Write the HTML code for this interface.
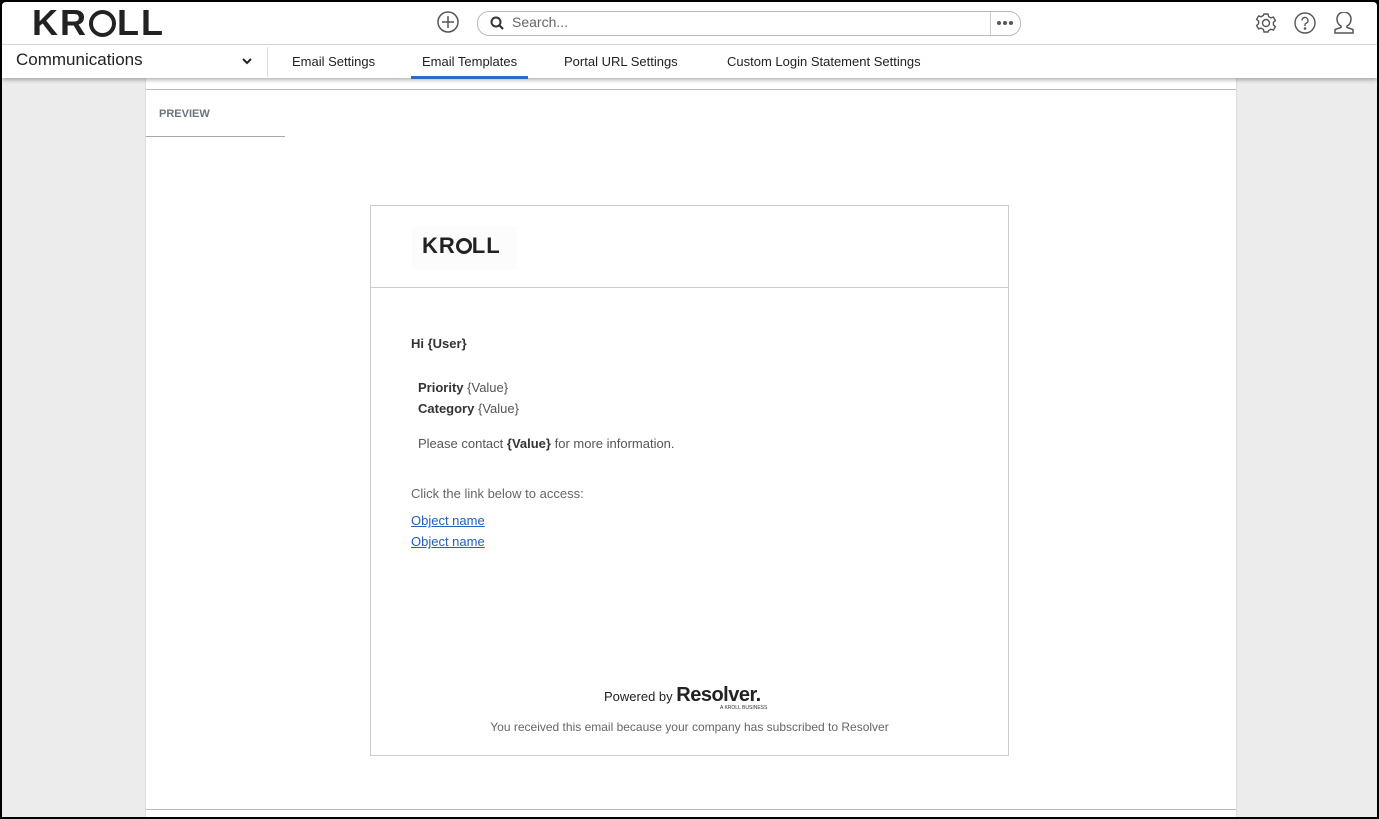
<!DOCTYPE html><html><head><style>
body{margin:0;width:1379px;height:819px;overflow:hidden;font-family:"Liberation Sans",sans-serif;background:#000;}
#f{position:absolute;left:2px;top:2px;width:1375px;height:815px;background:#ececec;overflow:hidden;border-radius:4px 4px 0 0}
.hdr{position:absolute;left:0;top:0;width:100%;height:42px;background:#fff;border-bottom:1px solid #ddd}
.nav{position:absolute;left:0;top:43px;width:100%;height:33px;background:#fff;box-shadow:0 2px 4px rgba(0,0,0,.3);z-index:2}
.logo{position:absolute;font-weight:bold;color:#222;letter-spacing:1px}
.tab{position:absolute;top:9px;font-size:13px;color:#222}
.panel{position:absolute;left:143px;top:76px;width:1090px;height:760px;background:#fff;border-left:1px solid #ddd;border-right:1px solid #ddd}
.card{position:absolute;left:368px;top:203px;width:637px;height:549px;border:1px solid #ccc;background:#fff;font-size:13px;color:#333}
a{color:#2060c0;text-decoration:underline}
.g{color:#555}
</style></head><body><div id="f">
<div class="hdr">
<div class="logo" style="left:30px;top:0px;font-size:36px;letter-spacing:2px">KR<span style="display:inline-block;width:27px;height:27px;border:4px solid #222;border-radius:50%;box-sizing:border-box;vertical-align:-2px;margin:0 1px"></span>LL</div>
<svg style="position:absolute;left:435px;top:9px" width="22" height="22"><circle cx="11" cy="11" r="10" fill="none" stroke="#555" stroke-width="1.5"/><path d="M11 5v12M5 11h12" stroke="#555" stroke-width="1.5"/></svg>
<div style="position:absolute;left:475px;top:9px;width:542px;height:23px;border:1px solid #bbb;border-radius:12px"></div>
<div style="position:absolute;left:988px;top:10px;width:1px;height:23px;background:#ccc"></div>
<svg style="position:absolute;left:488px;top:14px" width="14" height="14"><circle cx="6" cy="6" r="4.5" fill="none" stroke="#333" stroke-width="2"/><path d="M9 9l4 4" stroke="#333" stroke-width="2.2"/></svg>
<div style="position:absolute;left:510px;top:12px;font-size:14px;color:#666">Search...</div>
<svg style="position:absolute;left:994px;top:18px" width="18" height="6" fill="#555"><circle cx="3" cy="3" r="2"/><circle cx="9" cy="3" r="2"/><circle cx="15" cy="3" r="2"/></svg>
<svg style="position:absolute;left:1253px;top:10px" width="22" height="22" fill="none" stroke="#555" stroke-width="1.4"><circle cx="11" cy="11" r="3.5"/><path d="M9 2h4l.6 2.6 2.3 1.3 2.5-.8 2 3.4-2 1.8v2.6l2 1.8-2 3.4-2.5-.8-2.3 1.3L13 20H9l-.6-2.6-2.3-1.3-2.5.8-2-3.4 2-1.8V9.1l-2-1.8 2-3.4 2.5.8 2.3-1.3z"/></svg>
<svg style="position:absolute;left:1292px;top:10px" width="22" height="22" fill="none" stroke="#555" stroke-width="1.4"><circle cx="11" cy="11" r="10"/><path d="M8 8.5a3 3 0 1 1 4 2.8c-.8.4-1 .9-1 1.7v1"/><circle cx="11" cy="16.5" r=".6" fill="#555"/></svg>
<svg style="position:absolute;left:1331px;top:10px" width="22" height="22" fill="none" stroke="#555" stroke-width="1.5"><path d="M8 14c-3-1.5-4-4-4-7a7 7 0 0 1 14 0c0 3-1 5.5-4 7v1.5l6 2V21H2v-3.5l6-2z"/></svg>
</div>
<div class="nav">
<div style="position:absolute;left:14px;top:5px;font-size:17px;color:#222">Communications</div>
<svg style="position:absolute;left:240px;top:13px" width="10" height="8"><path d="M1 1l4 4 4-4" fill="none" stroke="#222" stroke-width="2"/></svg>
<div style="position:absolute;left:265px;top:2px;width:1px;height:30px;background:#ddd"></div>
<div class="tab" style="left:290px">Email Settings</div>
<div class="tab" style="left:420px">Email Templates</div>
<div style="position:absolute;left:409px;top:31px;width:117px;height:3px;background:#2e6bc6"></div>
<div class="tab" style="left:562px">Portal URL Settings</div>
<div class="tab" style="left:725px">Custom Login Statement Settings</div>
</div>
<div class="panel">
<div style="position:absolute;left:0;top:11px;width:100%;height:1px;background:#bbb"></div>
<div style="position:absolute;left:13px;top:30px;font-size:11px;font-weight:bold;color:#6b7380">PREVIEW</div>
<div style="position:absolute;left:0;top:58px;width:139px;height:1px;background:#aaa"></div>
<div style="position:absolute;left:0;top:731px;width:100%;height:1px;background:#bbb"></div>
</div>
<div class="card">
<div style="position:absolute;left:41px;top:20px;width:105px;height:44px;background:#fcfcfc"></div>
<div class="logo" style="left:51px;top:27px;font-size:22px">KR<span style="display:inline-block;width:16px;height:16px;border:3px solid #222;border-radius:50%;box-sizing:border-box;vertical-align:-1px"></span>LL</div>
<div style="position:absolute;left:0;top:81px;width:100%;height:1px;background:#ccc"></div>
<div style="position:absolute;left:40px;top:130px;font-weight:bold">Hi {User}</div>
<div style="position:absolute;left:47px;top:174px"><b>Priority</b> <span class="g">{Value}</span></div>
<div style="position:absolute;left:47px;top:195px"><b>Category</b> <span class="g">{Value}</span></div>
<div style="position:absolute;left:47px;top:230px" class="g">Please contact <b style="color:#333">{Value}</b> for more information.</div>
<div style="position:absolute;left:40px;top:280px;color:#666">Click the link below to access:</div>
<div style="position:absolute;left:40px;top:307px"><a>Object name</a></div>
<div style="position:absolute;left:40px;top:328px"><a>Object name</a></div>
<div style="position:absolute;left:233px;top:478px;color:#222;font-size:13px">Powered by <b style="font-size:20px;letter-spacing:-.5px">Resolver.</b></div>
<div style="position:absolute;left:349px;top:499px;font-size:5px;color:#333">A KROLL BUSINESS</div>
<div style="position:absolute;left:0;width:100%;text-align:center;top:514px;font-size:12px;color:#666">You received this email because your company has subscribed to Resolver</div>
</div>
</div></body></html>
